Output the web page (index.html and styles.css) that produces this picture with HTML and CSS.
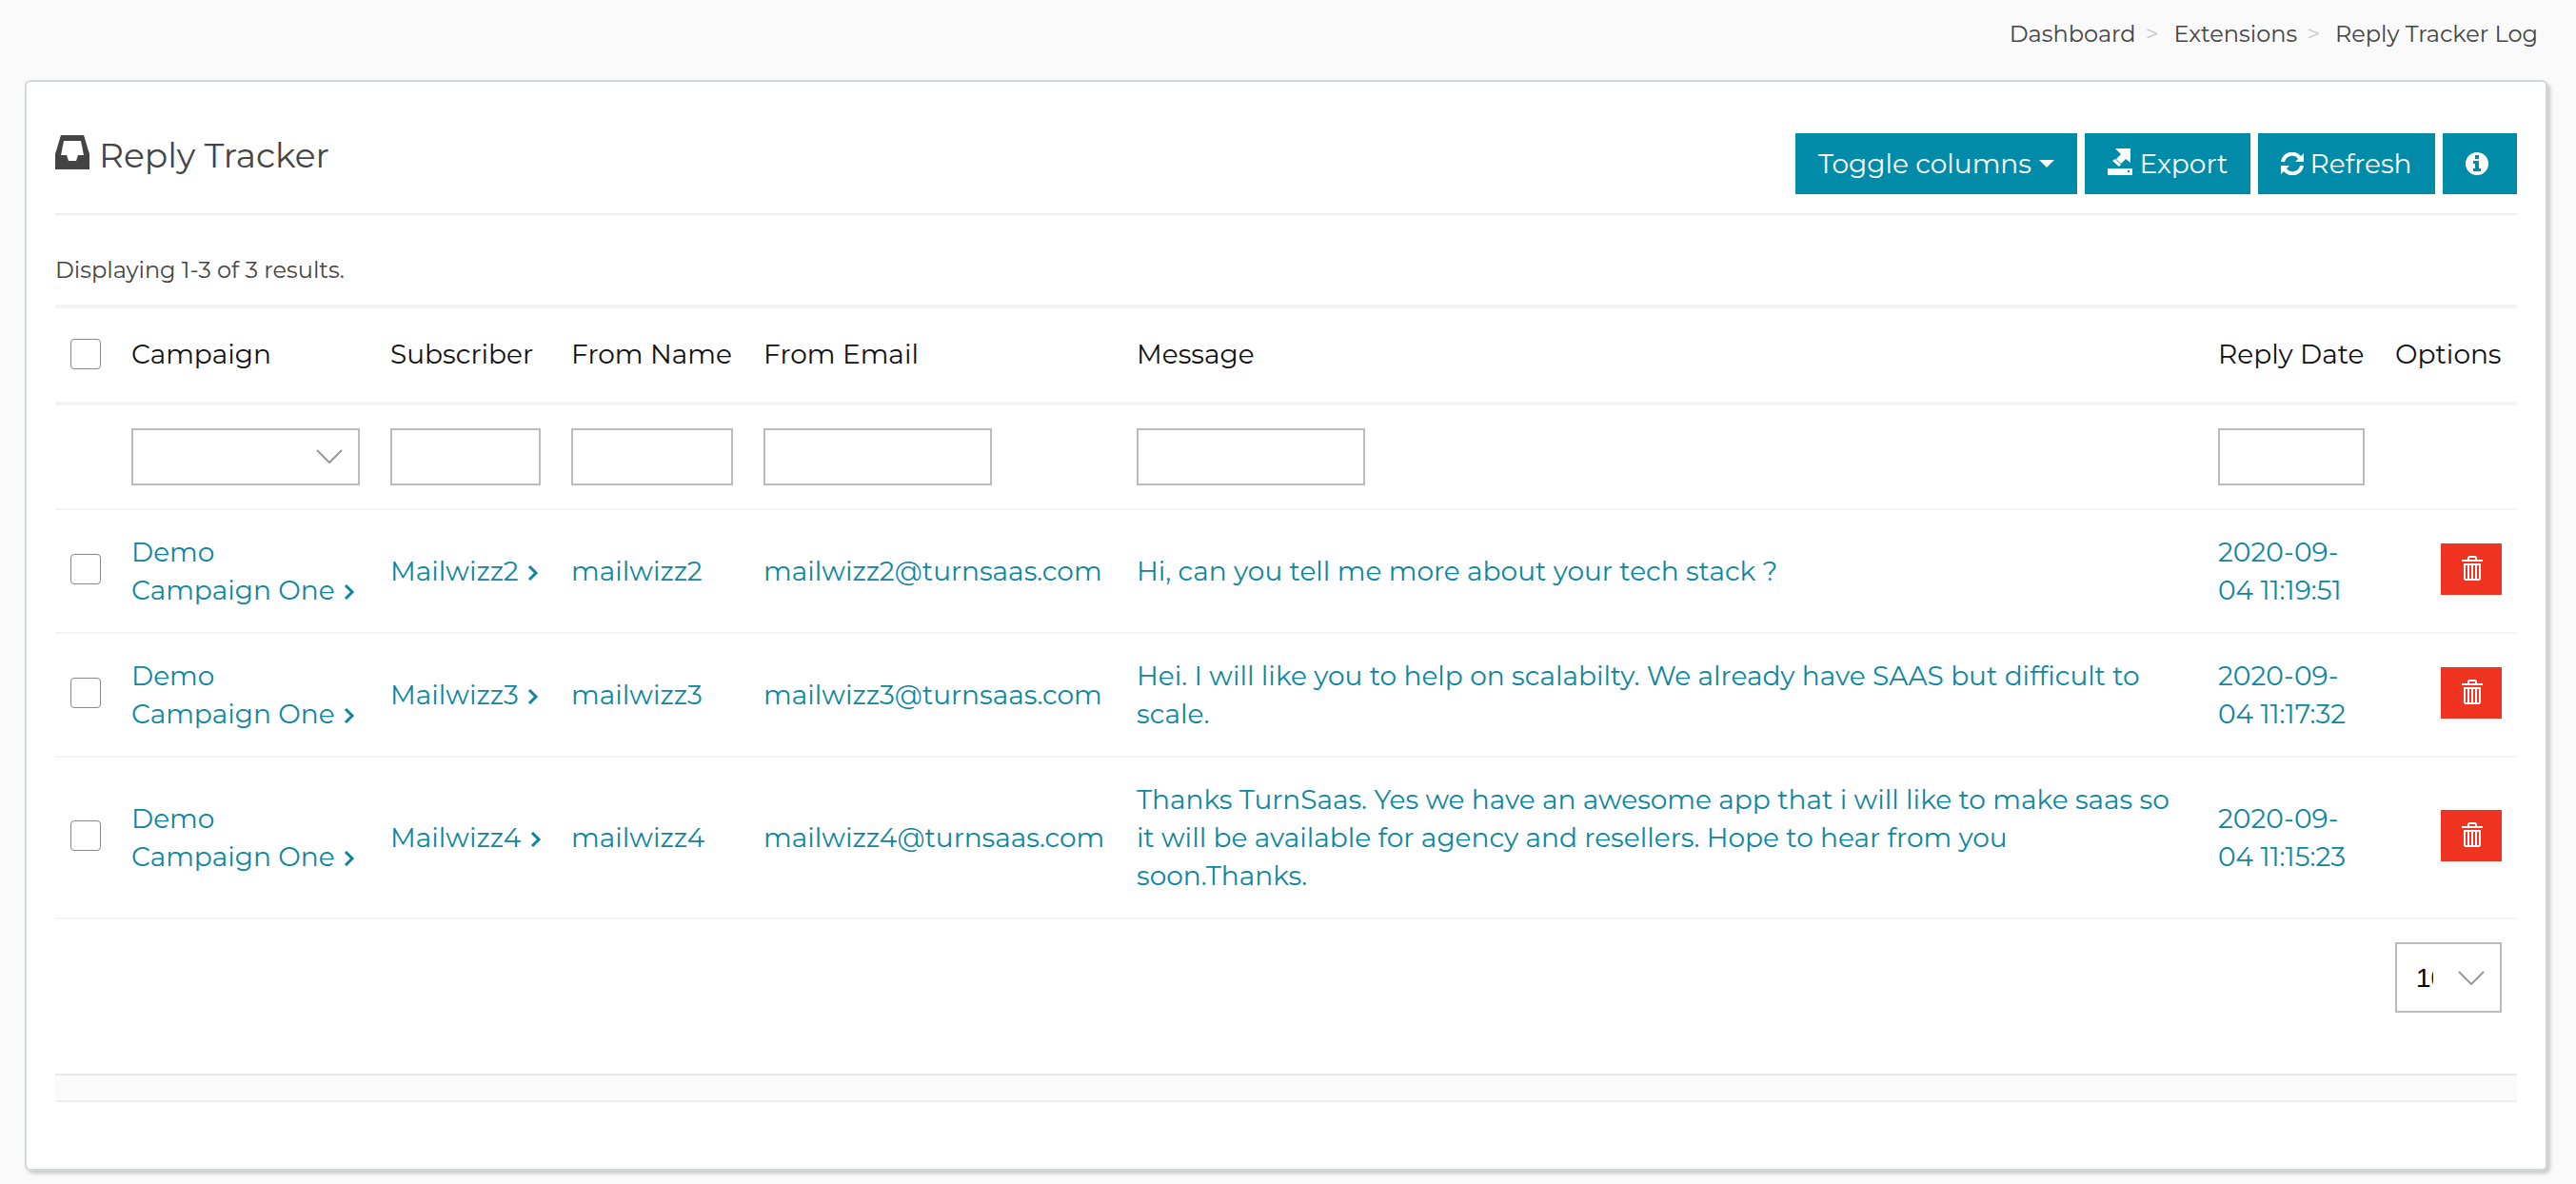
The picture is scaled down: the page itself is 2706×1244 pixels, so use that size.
FILE: index.html
```html
<!DOCTYPE html>
<html lang="en">
<head>
    <meta charset="UTF-8">
    <meta name="viewport" content="width=device-width, initial-scale=1.0">
    <title>Reply Tracker Log</title>
    <link rel="stylesheet" href="styles.css">
</head>
<body>
    <!-- shared icons -->
    <svg class="sprite" aria-hidden="true">
        <symbol id="icon-angle" viewBox="0 0 14 20">
            <path d="M4 3l7 7-7 7" fill="none" stroke="currentColor" stroke-width="3"/>
        </symbol>
        <symbol id="icon-down" viewBox="0 0 28 16">
            <path d="M1 1l13 13L27 1" fill="none" stroke="currentColor" stroke-width="2"/>
        </symbol>
        <symbol id="icon-trash" viewBox="0 0 22 26">
            <path d="M0 4h6V1.500L7.500 0h7L16 1.500V4h6v2H0V4zm8 0h6V2H8v2z" fill="currentColor" fill-rule="evenodd"/>
            <path d="M3 9h16v15l-1 1H4l-1-1V9zM7 9v16M11 9v16M15 9v16" fill="none" stroke="currentColor" stroke-width="2"/>
        </symbol>
    </svg>

    <nav class="breadcrumbs">
        <a href="#">Dashboard</a><span>&gt;</span>
        <a href="#">Extensions</a><span>&gt;</span>
        <a href="#">Reply Tracker Log</a>
    </nav>

    <div class="box">
        <div class="box-header">
            <h3 class="box-title">
                <svg width="36" height="36" viewBox="0 0 36 36"><path d="M6 0h24l6 20v16H0V20L6 0zm3 6L6 21h6l2 6h8l2-6h6L27 6H9z" fill="currentColor" fill-rule="evenodd"/></svg>
                Reply Tracker
            </h3>
            <div class="box-tools">
                <button type="button" class="btn btn-toggle">Toggle columns <i class="caret"></i></button>
                <button type="button" class="btn btn-export">
                    <svg width="26" height="32" viewBox="0 0 26 32"><path d="M8 0h16v15l-5-4-5 5-5-5 5-5-6-6zM8 11l6 6-2 2-7-6 3-2zM0 21h26v7H0v-7zm21 2v2h2v-2h-2z" fill="currentColor" fill-rule="evenodd"/></svg>
                    Export
                </button>
                <button type="button" class="btn btn-refresh">
                    <svg width="24" height="24" viewBox="0 0 24 24"><path d="M2 10a10 10 0 0 1 18-4M22 14a10 10 0 0 1-18 4" fill="none" stroke="currentColor" stroke-width="4"/><path d="M24 1v9h-9l9-9zM0 23v-9h9l-9 9z" fill="currentColor"/></svg>
                    Refresh
                </button>
                <button type="button" class="btn btn-info" aria-label="Info">
                    <svg width="24" height="24" viewBox="0 0 24 24"><path d="M12 0a12 12 0 1 0 0 24 12 12 0 0 0 0-24zM10 3h4v4h-4V3zM8 9h6v8h2v3H8v-3h2v-5H8V9z" fill="currentColor" fill-rule="evenodd"/></svg>
                </button>
            </div>
        </div>

        <div class="box-body">
            <div class="summary">Displaying 1-3 of 3 results.</div>
            <table class="items">
                <colgroup>
                    <col class="col-check">
                    <col class="col-campaign">
                    <col class="col-subscriber">
                    <col class="col-name">
                    <col class="col-email">
                    <col class="col-message">
                    <col class="col-date">
                    <col class="col-options">
                </colgroup>
                <thead>
                    <tr>
                        <th><input type="checkbox" aria-label="Select all"></th>
                        <th>Campaign</th>
                        <th>Subscriber</th>
                        <th>From Name</th>
                        <th>From Email</th>
                        <th>Message</th>
                        <th>Reply Date</th>
                        <th>Options</th>
                    </tr>
                    <tr class="filters">
                        <td></td>
                        <td>
                            <div class="select">
                                <select aria-label="Campaign"><option></option></select>
                                <svg width="28" height="16"><use href="#icon-down"/></svg>
                            </div>
                        </td>
                        <td><input type="text" aria-label="Subscriber"></td>
                        <td><input type="text" aria-label="From Name"></td>
                        <td><input type="text" aria-label="From Email"></td>
                        <td><input type="text" aria-label="Message"></td>
                        <td><input type="text" aria-label="Reply Date"></td>
                        <td></td>
                    </tr>
                </thead>
                <tbody>
                    <tr>
                        <td><input type="checkbox" aria-label="Select mailwizz2"></td>
                        <td><a href="#">Demo<br>Campaign One <svg class="angle"><use href="#icon-angle"/></svg></a></td>
                        <td><a href="#">Mailwizz2 <svg class="angle"><use href="#icon-angle"/></svg></a></td>
                        <td>mailwizz2</td>
                        <td>mailwizz2@turnsaas.com</td>
                        <td class="message">Hi, can you tell me more about your tech stack ?</td>
                        <td>2020-09-<br>04 11:19:51</td>
                        <td class="options"><button type="button" class="btn-delete" aria-label="Delete"><svg width="22" height="26"><use href="#icon-trash"/></svg></button></td>
                    </tr>
                    <tr>
                        <td><input type="checkbox" aria-label="Select mailwizz3"></td>
                        <td><a href="#">Demo<br>Campaign One <svg class="angle"><use href="#icon-angle"/></svg></a></td>
                        <td><a href="#">Mailwizz3 <svg class="angle"><use href="#icon-angle"/></svg></a></td>
                        <td>mailwizz3</td>
                        <td>mailwizz3@turnsaas.com</td>
                        <td class="message">Hei. I will like you to help on scalabilty. We already have SAAS but difficult to<br>scale.</td>
                        <td>2020-09-<br>04 11:17:32</td>
                        <td class="options"><button type="button" class="btn-delete" aria-label="Delete"><svg width="22" height="26"><use href="#icon-trash"/></svg></button></td>
                    </tr>
                    <tr>
                        <td><input type="checkbox" aria-label="Select mailwizz4"></td>
                        <td><a href="#">Demo<br>Campaign One <svg class="angle"><use href="#icon-angle"/></svg></a></td>
                        <td><a href="#">Mailwizz4 <svg class="angle"><use href="#icon-angle"/></svg></a></td>
                        <td>mailwizz4</td>
                        <td>mailwizz4@turnsaas.com</td>
                        <td class="message">Thanks TurnSaas. Yes we have an awesome app that i will like to make saas so<br>it will be available for agency and resellers. Hope to hear from you<br>soon.Thanks.</td>
                        <td>2020-09-<br>04 11:15:23</td>
                        <td class="options"><button type="button" class="btn-delete" aria-label="Delete"><svg width="22" height="26"><use href="#icon-trash"/></svg></button></td>
                    </tr>
                </tbody>
                <tfoot>
                    <tr>
                        <td colspan="7"></td>
                        <td>
                            <div class="select page-size">
                                <select aria-label="Results per page"><option>10</option></select>
                                <svg width="28" height="16"><use href="#icon-down"/></svg>
                            </div>
                        </td>
                    </tr>
                </tfoot>
            </table>
        </div>

        <div class="box-footer"></div>
    </div>
</body>
</html>
```
FILE: styles.css
```css
*{
    padding: 0;
    margin: 0;
    box-sizing: border-box;
}

body{
    background: #fafafa;
    color: #444;
    font-family: Montserrat, Inter, sans-serif;
    font-size: 28px;
    line-height: 40px;
}

a{
    color: inherit;
    text-decoration: none;
}

.sprite{
    position: absolute;
    width: 0;
    height: 0;
}

/* breadcrumbs */

.breadcrumbs{
    display: flex;
    justify-content: flex-end;
    padding: 16px 40px 28px;
    font-size: 24px;
}

.breadcrumbs span{
    margin: 0 16px 0 10px;
    color: #ccc;
}

/* box */

.box{
    margin: 0 30px 14px 26px;
    padding: 54px 30px 70px;
    border: 2px solid #d2d6de;
    border-radius: 6px;
    background: #fff;
    box-shadow: 3px 3px 4px rgba(0, 0, 0, 0.2);
}

.box-header{
    display: flex;
    justify-content: space-between;
    align-items: flex-start;
    padding-bottom: 20px;
    border-bottom: 2px solid #eee;
}

.box-title{
    display: flex;
    gap: 10px;
    font-size: 36px;
    font-weight: 400;
    line-height: 46px;
}

.box-title svg{
    margin-top: 2px;
}

.box-tools{
    display: flex;
    gap: 8px;
}

.btn{
    display: flex;
    justify-content: center;
    align-items: center;
    gap: 8px;
    height: 64px;
    border: none;
    background: #008ca9;
    color: #fff;
    font-family: inherit;
    font-size: 28px;
}

.btn-toggle{
    width: 296px;
}

.btn-export{
    width: 174px;
}

.btn-refresh{
    gap: 6px;
    width: 186px;
}

.btn-info{
    width: 78px;
    padding-right: 6px;
}

.caret{
    border-top: 8px solid #fff;
    border-left: 8px solid transparent;
    border-right: 8px solid transparent;
}

.summary{
    padding: 38px 0 16px;
    font-size: 24px;
}

/* table */

.items{
    width: 100%;
    table-layout: fixed;
    border-collapse: separate;
    border-spacing: 0;
    border-top: 4px solid #f4f4f4;
    color: #0e86a0;
}

.col-check{
    width: 64px;
}

.col-campaign{
    width: 272px;
}

.col-subscriber{
    width: 190px;
}

.col-name{
    width: 202px;
}

.col-email{
    width: 392px;
}

.col-date{
    width: 186px;
}

.col-options{
    width: 144px;
}

.items th,
.items td{
    padding: 24px 16px;
    border-bottom: 2px solid #f4f4f4;
    text-align: left;
    vertical-align: middle;
    white-space: nowrap;
}

.items th{
    height: 102px;
    padding: 22px 16px 24px;
    border-bottom-width: 4px;
    color: #111;
    font-weight: 400;
}

.items .message{
    white-space: normal;
}

.items tfoot td{
    border-bottom: none;
}

.items .options{
    text-align: right;
}

.angle{
    width: 14px;
    height: 20px;
    vertical-align: -2px;
}

input[type="checkbox"]{
    appearance: none;
    display: block;
    width: 32px;
    height: 32px;
    border: 1px solid #888;
    border-radius: 4px;
    background: #fff;
}

tbody input[type="checkbox"]{
    margin-bottom: 4px;
}

input[type="text"],
.select select{
    display: block;
    width: 100%;
    max-width: 240px;
    height: 60px;
    border: 2px solid #bbb;
    border-radius: 0;
    background: #fff;
    appearance: none;
}

.select{
    position: relative;
}

.select svg{
    position: absolute;
    top: 22px;
    right: 18px;
    color: #999;
}

.page-size select{
    height: 74px;
    padding: 0 70px 0 20px;
    color: #000;
    font-family: "Liberation Sans", sans-serif;
    font-size: 28px;
}

.page-size svg{
    top: 30px;
}

.btn-delete{
    display: inline-flex;
    justify-content: center;
    align-items: center;
    width: 64px;
    height: 54px;
    margin-bottom: 4px;
    padding: 0 0 2px 2px;
    border: none;
    background: #ef3422;
    color: #fff;
    vertical-align: middle;
}

/* footer strip */

.box-footer{
    height: 30px;
    margin-top: 40px;
    border-top: 2px solid #e8e8e8;
    border-bottom: 2px solid #eee;
    background: #fafafa;
}
```
